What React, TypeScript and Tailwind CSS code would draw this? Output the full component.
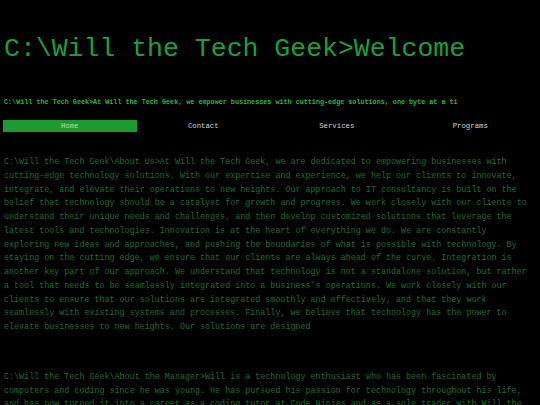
const about =
  "C:\\Will the Tech Geek\\About Us>At Will the Tech Geek, we are dedicated to empowering businesses with cutting-edge technology solutions. With our expertise and experience, we help our clients to innovate, integrate, and elevate their operations to new heights. Our approach to IT consultancy is built on the belief that technology should be a catalyst for growth and progress. We work closely with our clients to understand their unique needs and challenges, and then develop customized solutions that leverage the latest tools and technologies. Innovation is at the heart of everything we do. We are constantly exploring new ideas and approaches, and pushing the boundaries of what is possible with technology. By staying on the cutting edge, we ensure that our clients are always ahead of the curve. Integration is another key part of our approach. We understand that technology is not a standalone solution, but rather a tool that needs to be seamlessly integrated into a business's operations. We work closely with our clients to ensure that our solutions are integrated smoothly and effectively, and that they work seamlessly with existing systems and processes. Finally, we believe that technology has the power to elevate businesses to new heights. Our solutions are designed";

const manager =
  "C:\\Will the Tech Geek\\About the Manager>Will is a technology enthusiast who has been fascinated by computers and coding since he was young. He has pursued his passion for technology throughout his life, and has now turned it into a career as a coding tutor at Code Ninjas and as a sole trader with Will the Tech Geek.";

const links = ["Home", "Contact", "Services", "Programs"];

export default function App() {
  return (
    <div className="h-[405px] overflow-hidden bg-black font-['Courier_New','Liberation_Mono',monospace]">
      <h1 className="px-[4px] pt-[33px] text-[26.5px] leading-[32px] text-[#1f9c3c]">
        {"C:\\Will the Tech Geek>Welcome"}
      </h1>

      <p className="px-[4px] mt-[32px] text-[6.75px] leading-[10px] font-bold text-[#22b845] whitespace-nowrap">
        {"C:\\Will the Tech Geek>At Will the Tech Geek, we empower businesses with cutting-edge solutions, one byte at a ti"}
      </p>

      <nav className="mx-[3px] mt-[13px] grid grid-cols-4 text-[7.3px] leading-[12px]">
        {links.map((l, i) => (
          <a
            key={l}
            className={
              i === 0
                ? "h-[12px] text-center bg-[#1d9a32] text-[#b4dcb4]"
                : "h-[12px] text-center text-[#d4d4d4]"
            }
          >
            {l}
          </a>
        ))}
      </nav>

      <section className="px-[4px] mt-[24px] text-[8.4px] leading-[13.75px] text-[#1a6c2d]">
        <p>{about}</p>
        <p className="mt-[36px]">{manager}</p>
      </section>
    </div>
  );
}
